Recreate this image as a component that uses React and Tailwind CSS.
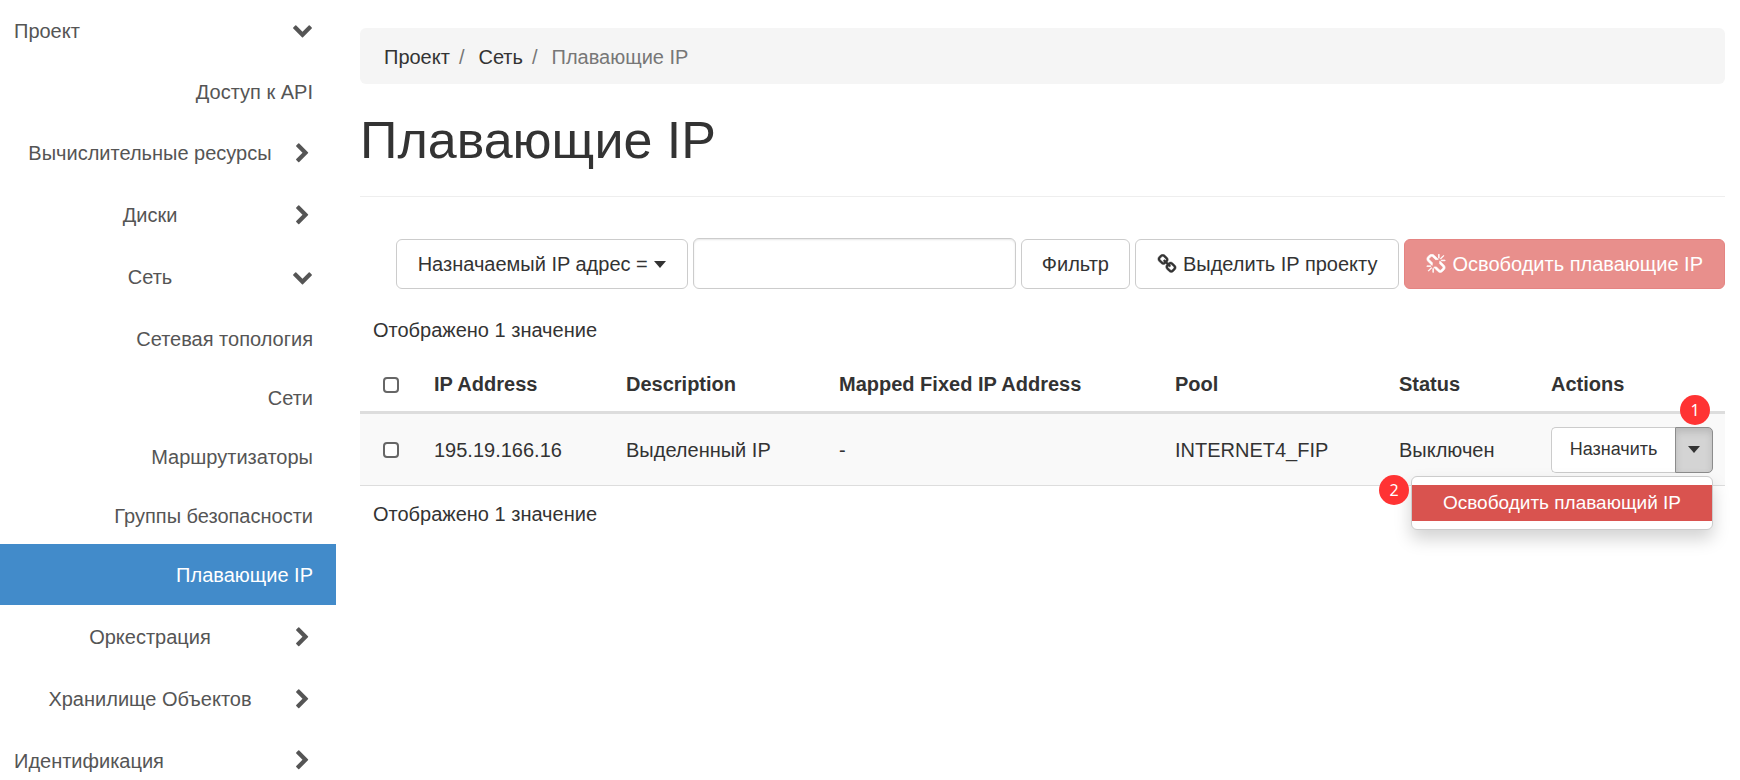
const NAV = [
  { label: "Проект", kind: "root", open: true },
  { label: "Доступ к API", kind: "leaf" },
  { label: "Вычислительные ресурсы", kind: "group" },
  { label: "Диски", kind: "group" },
  { label: "Сеть", kind: "group", open: true },
  { label: "Сетевая топология", kind: "sub" },
  { label: "Сети", kind: "sub" },
  { label: "Маршрутизаторы", kind: "sub" },
  { label: "Группы безопасности", kind: "sub" },
  { label: "Плавающие IP", kind: "active" },
  { label: "Оркестрация", kind: "group" },
  { label: "Хранилище Объектов", kind: "group" },
  { label: "Идентификация", kind: "root" },
];

function Chevron({ open }) {
  return (
    <svg viewBox="0 0 1792 1792" className="h-[21px] w-[21px] shrink-0" fill="currentColor" aria-hidden="true">
      {open ? (
        <path d="M1683 728l-742 741q-19 19-45 19t-45-19l-742-741q-19-19-19-45.500t19-45.500l166-165q19-19 45-19t45 19l531 531 531-531q19-19 45-19t45 19l166 165q19 19 19 45.500t-19 45.500z" />
      ) : (
        <path d="M1363 877l-742 742q-19 19-45 19t-45-19l-166-166q-19-19-19-45t19-45l531-531-531-531q-19-19-19-45t19-45l166-166q19-19 45-19t45 19l742 742q19 19 19 45t-19 45z" />
      )}
    </svg>
  );
}

function LinkIcon() {
  return (
    <svg viewBox="0 0 1792 1792" className="h-5 w-5 shrink-0" fill="currentColor" stroke="currentColor" strokeWidth="40" aria-hidden="true">
      <path d="M1520 1216q0-40-28-68l-208-208q-28-28-68-28-42 0-72 32 3 3 19 18.500t21.500 21.500 15 19 13 25.500 3.500 27.500q0 40-28 68t-68 28q-15 0-27.500-3.500t-25.500-13-19-15-21.500-21.500-18.500-19q-33 31-33 73 0 40 28 68l206 207q27 27 68 27 40 0 68-26l147-146q28-28 28-67zm-703-705q0-40-28-68l-206-207q-28-28-68-28-39 0-68 27l-147 146q-28 28-28 67 0 40 28 68l208 208q27 27 68 27 42 0 72-31-3-3-19-18.500t-21.500-21.500-15-19-13-25.500-3.500-27.500q0-40 28-68t68-28q15 0 27.500 3.500t25.500 13 19 15 21.500 21.500 18.500 19q33-31 33-73zm895 705q0 120-85 203l-147 146q-83 83-203 83-121 0-204-85l-206-207q-83-83-83-203 0-123 88-209l-88-88q-86 88-208 88-120 0-204-84l-208-208q-84-84-84-204t85-203l147-146q83-83 203-83 121 0 204 85l206 207q83 83 83 203 0 123-88 209l88 88q86-88 208-88 120 0 204 84l208 208q84 84 84 204z" />
    </svg>
  );
}

function UnlinkIcon() {
  return (
    <svg viewBox="0 0 1792 1792" className="h-5 w-5 shrink-0" fill="currentColor" stroke="currentColor" strokeWidth="60" aria-hidden="true">
      <path d="M503 1271l-256 256q-10 9-23 9-12 0-23-9-9-10-9-23t9-23l256-256q10-9 23-9t23 9q9 10 9 23t-9 23zm169 41v320q0 14-9 23t-23 9-23-9-9-23v-320q0-14 9-23t23-9 23 9 9 23zm-224-224q0 14-9 23t-23 9h-320q-14 0-23-9t-9-23 9-23 23-9h320q14 0 23 9t9 23zm1264 128q0 120-85 203l-147 146q-83 83-203 83-121 0-204-85l-334-335q-21-21-42-56l239-18 273 274q28 28 68 28.500t68-27.500l147-146q28-28 28-67 0-40-28-68l-274-275 18-239q35 21 56 42l336 336q84 86 84 204zm-617-724l-239 18-273-274q-28-28-68-28-39 0-68 27l-147 146q-28 28-28 67 0 40 28 68l274 274-18 240q-35-21-56-42l-336-336q-84-86-84-204 0-120 85-203l147-146q83-83 203-83 121 0 204 85l334 335q21 21 42 56zm633 84q0 14-9 23t-23 9h-320q-14 0-23-9t-9-23 9-23 23-9h320q14 0 23 9t9 23zm-544-544v320q0 14-9 23t-23 9-23-9-9-23v-320q0-14 9-23t23-9 23 9 9 23zm407 151l-256 256q-11 9-23 9t-23-9q-9-10-9-23t9-23l256-256q10-9 23-9t23 9q9 10 9 23t-9 23z" />
    </svg>
  );
}

function Caret() {
  return (
    <svg viewBox="0 0 12 7" className="h-[7px] w-[12px] shrink-0" fill="currentColor" aria-hidden="true">
      <path d="M0 0h12L6 7z" />
    </svg>
  );
}

function NavItem({ label, kind, open }) {
  if (kind === "root") {
    return (
      <a href="#" className="flex h-[61px] items-center justify-between pr-[23px] pl-[14px]">
        {label}
        <Chevron open={open} />
      </a>
    );
  }
  if (kind === "group") {
    return (
      <a href="#" className="flex h-[62px] items-center pr-[23px]">
        <span className="flex-1 pl-2 text-center">{label}</span>
        <Chevron open={open} />
      </a>
    );
  }
  if (kind === "active") {
    return (
      <a
        href="#"
        aria-current="page"
        className="mb-px flex h-[61px] items-center justify-end bg-[#428bca] pr-[23px] text-white"
      >
        {label}
      </a>
    );
  }
  return (
    <a
      href="#"
      className={
        kind === "leaf"
          ? "flex h-[61px] items-center justify-end pr-[23px]"
          : "flex h-[59px] items-center justify-end pt-0.5 pr-[23px]"
      }
    >
      {label}
    </a>
  );
}

function Check({ label }) {
  return (
    <input
      type="checkbox"
      aria-label={label}
      className="block h-4 w-4 appearance-none rounded-[4px] border-2 border-[#666666] bg-white checked:bg-[#428bca]"
    />
  );
}

function Badge({ children, className }) {
  return (
    <span
      className={`absolute flex h-[30px] w-[30px] items-center justify-center rounded-full bg-[#ff3333] font-['Noto_Sans',sans-serif] text-base text-white ${className}`}
    >
      {children}
    </span>
  );
}

const BUTTON =
  "flex h-[50px] shrink-0 items-center gap-1.5 rounded-md border border-[#cccccc] bg-white whitespace-nowrap";

export default function App() {
  return (
    <div className="flex h-screen overflow-hidden bg-white font-['Liberation_Sans',Arial,sans-serif] text-xl leading-7 text-[#333333]">
      <nav className="w-[336px] shrink-0 text-[#555555]">
        {NAV.map((item) => (
          <NavItem key={item.label} {...item} />
        ))}
      </nav>

      <main className="min-w-0 flex-1 pt-7 pr-[15px] pl-6">
        <ol className="flex h-14 items-center rounded-md bg-[#f5f5f5] px-6 pt-0.5">
          <li><a href="#">Проект</a></li>
          <li className="px-[9px] text-[#777777]">/</li>
          <li className="pl-[5px]"><a href="#">Сеть</a></li>
          <li className="px-[9px] text-[#777777]">/</li>
          <li className="pl-[5px] text-[#777777]">Плавающие IP</li>
        </ol>

        <h1 className="mt-[26px] border-b border-[#eeeeee] pb-[26px] text-[52px] leading-[60px]">Плавающие IP</h1>

        <div className="mt-[41px] flex items-end justify-end gap-[5px]">
          <button type="button" className={`${BUTTON} px-[21px]`}>
            Назначаемый IP адрес =
            <Caret />
          </button>
          <input
            type="text"
            aria-label="Значение фильтра"
            className="h-[51px] w-[323px] rounded-md border border-[#cccccc] px-4 shadow-[inset_0_1px_2px_rgba(0,0,0,0.1)]"
          />
          <button type="button" className={`${BUTTON} px-5`}>Фильтр</button>
          <button type="button" className={`${BUTTON} px-[21px]`}>
            <LinkIcon />
            Выделить IP проекту
          </button>
          <button
            type="button"
            disabled
            className="flex h-[50px] shrink-0 items-center gap-1.5 rounded-md border border-[#e58482] bg-[#e88f8c] px-[21px] whitespace-nowrap text-white"
          >
            <UnlinkIcon />
            Освободить плавающие IP
          </button>
        </div>

        <table className="mt-[27px] w-full table-fixed border-collapse text-left">
          <caption className="h-[41px] pl-[13px] text-left">Отображено 1 значение</caption>
          <colgroup>
            <col className="w-[61px]" />
            <col className="w-[192px]" />
            <col className="w-[213px]" />
            <col className="w-[336px]" />
            <col className="w-[224px]" />
            <col className="w-[152px]" />
            <col />
          </colgroup>
          <thead>
            <tr className="h-[55px] border-b-[3px] border-[#dddddd]">
              <th className="pt-0.5 pl-[23px]"><Check label="Выбрать все" /></th>
              <th className="px-[13px]">IP Address</th>
              <th className="px-[13px]">Description</th>
              <th className="px-[13px]">Mapped Fixed IP Address</th>
              <th className="px-[13px]">Pool</th>
              <th className="px-[13px]">Status</th>
              <th className="px-[13px]">Actions</th>
            </tr>
          </thead>
          <tbody>
            <tr className="h-[73px] border-b border-[#dddddd] bg-[#f9f9f9]">
              <td className="pt-0.5 pl-[23px]"><Check label="Выбрать 195.19.166.16" /></td>
              <td className="px-[13px] pt-0.5">195.19.166.16</td>
              <td className="px-[13px] pt-0.5">Выделенный IP</td>
              <td className="px-[13px] pt-0.5">-</td>
              <td className="px-[13px] pt-0.5">INTERNET4_FIP</td>
              <td className="px-[13px] pt-0.5">Выключен</td>
              <td className="pt-0.5 pr-3 pl-[13px]">
                <div className="relative flex h-[46px] text-lg">
                  <button
                    type="button"
                    className="flex-1 rounded-l-[5px] border border-r-0 border-[#cccccc] bg-white pb-0.5"
                  >
                    Назначить
                  </button>
                  <button
                    type="button"
                    aria-label="Другие действия"
                    aria-expanded="true"
                    className="flex w-[38px] items-center justify-center rounded-r-[5px] border border-[#8c8c8c] bg-[#d4d4d4] pb-0.5 shadow-[inset_0_4px_7px_rgba(0,0,0,0.125)]"
                  >
                    <Caret />
                  </button>
                  <Badge className="-top-8 right-[3px]">1</Badge>
                  <div className="absolute top-[49px] right-0 w-[302px] rounded-md border border-[#cccccc] bg-white py-2 shadow-[0_9px_17px_rgba(0,0,0,0.175)]">
                    <button
                      type="button"
                      className="block h-9 w-full bg-[#d9534f] text-center text-[19px] whitespace-nowrap text-white"
                    >
                      Освободить плавающий IP
                    </button>
                    <Badge className="top-[-2px] right-[303px]">2</Badge>
                  </div>
                </div>
              </td>
            </tr>
          </tbody>
        </table>
        <p className="mt-[14px] pl-[13px]">Отображено 1 значение</p>
      </main>
    </div>
  );
}
